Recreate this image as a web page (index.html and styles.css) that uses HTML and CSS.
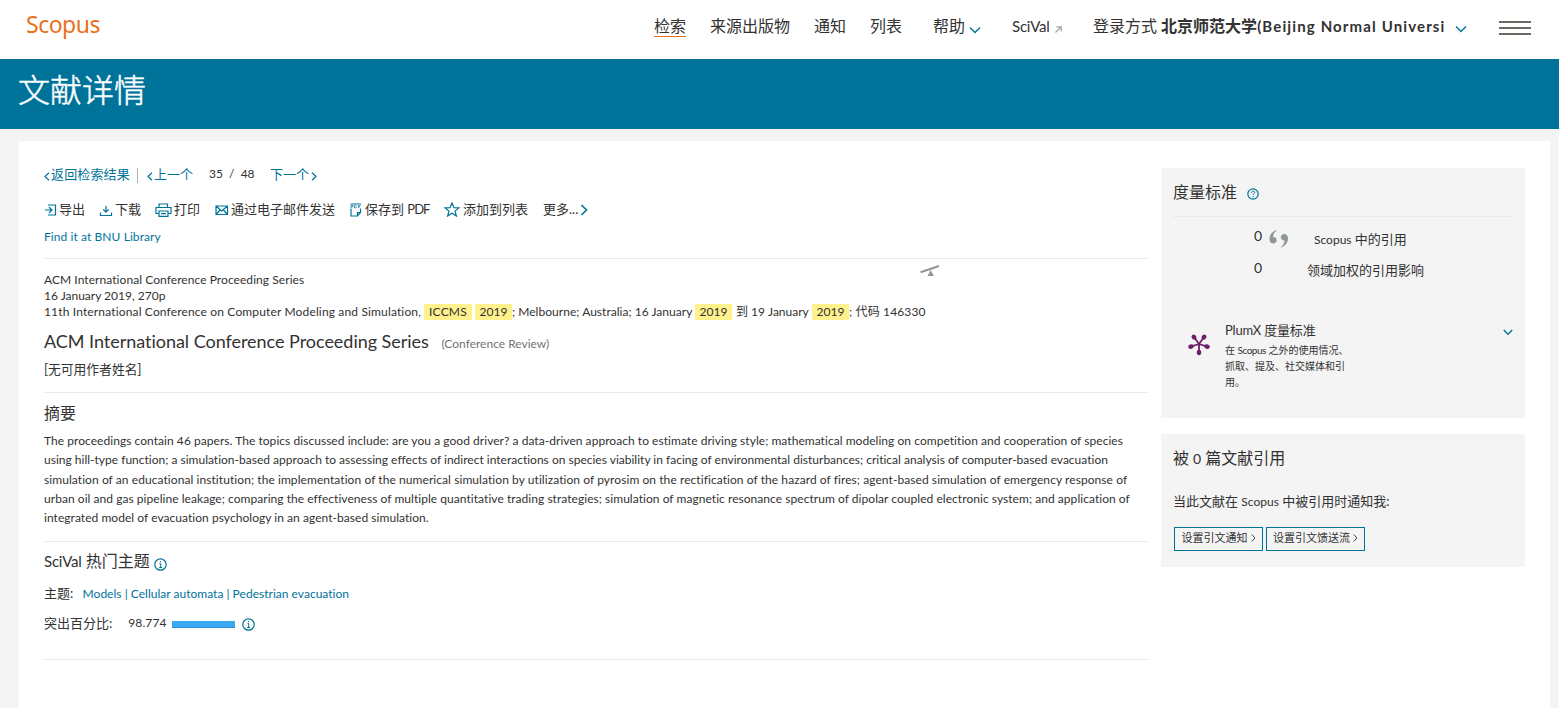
FILE: index.html
```html
<!DOCTYPE html>
<html lang="zh-CN">
<head>
    <meta charset="UTF-8">
    <meta name="viewport" content="width=device-width, initial-scale=1.0">
    <title>Scopus - 文献详情</title>
    <link rel="stylesheet" href="styles.css">
</head>
<body>
    <header class="header">
        <a class="logo">Scopus</a>
        <nav class="nav">
            <a><span class="active">检索</span></a>
            <a>来源出版物</a>
            <a>通知</a>
            <a>列表</a>
            <a>帮助<svg class="chevron help" width="12" height="8" viewBox="0 0 12 8"><path d="M1 1.5l5 5 5-5"/></svg></a>
            <a class="scival">SciVal<svg class="external" width="7" height="7" viewBox="0 0 7 7"><path d="M.5 6.5l5.5-5.5M1.5.8H6.2V5.5"/></svg></a>
            <a>登录方式 <b>北京师范大学<span class="inst">(Beijing Normal Universi</span></b></a>
        </nav>
        <svg class="chevron login" width="12" height="8" viewBox="0 0 12 8"><path d="M1 1.5l5 5 5-5"/></svg>
        <div class="menu"><i></i><i></i><i></i></div>
    </header>

    <div class="banner"><h1>文献详情</h1></div>

    <main class="page">
        <div class="content">
            <div class="pager">
                <a class="back"><svg width="6" height="9" viewBox="0 0 6 9"><path d="M5 .7L1 4.5l4 3.8"/></svg>返回检索结果</a>
                <a class="prev"><svg width="6" height="9" viewBox="0 0 6 9"><path d="M5 .7L1 4.5l4 3.8"/></svg>上一个</a>
                <span class="count">35&nbsp; / &nbsp;48</span>
                <a class="next">下一个<svg width="6" height="9" viewBox="0 0 6 9"><path d="M1 .7l4 3.8-4 3.8"/></svg></a>
            </div>

            <div class="toolbar">
                <a><svg width="14" height="14" viewBox="0 0 14 14"><path d="M4 2h7.5v10H4M1 7h6.5M5 4l3 3-3 3"/></svg>导出</a>
                <a><svg width="15" height="14" viewBox="0 0 15 14"><path d="M7 3v6M4.200 6.400L7 9.200l2.800-2.800M1.500 9.500v3h11v-3"/></svg>下载</a>
                <a><svg width="18" height="14" viewBox="0 0 18 14"><path d="M4 4.5V1h8.500v3.500M3.500 10.500H1v-6h15v6h-2.500M4 8h9v5.400H4zM6 10.700h5"/></svg>打印</a>
                <a><svg width="15" height="14" viewBox="0 0 15 14"><path d="M1 3h11.500v8.500H1zM1 3l5.700 5 5.800-5M1 11.500l4-4.500M12.500 11.500l-4-4.500"/></svg>通过电子邮件发送</a>
                <a><svg width="15" height="14" viewBox="0 0 15 14"><path d="M2 5.500V13h6.500l3-3.500v-4M8.500 13V9.500h3M1.500 1h10.500"/><path class="thin" d="M2 5V2.500h2v1.300H2M5.500 5V2.500h1.200L7.700 3.700 6.700 5H5.500M9.500 5V2.500h2M9.500 3.800h1.700"/></svg>保存到 <span class="pdf">PDF</span></a>
                <a><svg width="18" height="15" viewBox="0 0 18 15"><path d="M8 1l1.900 4.700 5 .2-3.900 3.200 1.400 4.900L8 11.200 3.600 14 5 9.100 1.100 5.900l5-.2z"/></svg>添加到列表</a>
                <a>更多...<svg class="more" width="8" height="12" viewBox="0 0 8 12"><path class="bold" d="M1.500 1l5 5-5 5"/></svg></a>
            </div>
            <a class="library">Find it at BNU Library</a>

            <section class="source">
                <svg class="seesaw" width="20" height="12" viewBox="0 0 20 12"><path class="plank" d="M.5 7.200L19 1"/><path class="pivot" d="M10.500 5l3.500 6H7.500z"/></svg>
                <p class="series">ACM International Conference Proceeding Series</p>
                <p class="issue">16 January 2019, 270p</p>
                <p class="conf"><span class="name">11th International Conference on Computer Modeling and Simulation,</span> <mark class="wide">ICCMS</mark> <mark>2019</mark><span class="place">; Melbourne; Australia; 16 January</span> <mark>2019</mark> <span class="to">到 19 January</span> <mark>2019</mark><span class="code">; 代码 146330</span></p>
                <h2>ACM International Conference Proceeding Series <small>(Conference Review)</small></h2>
                <p class="authors">[无可用作者姓名]</p>
            </section>

            <section class="abstract">
                <h3>摘要</h3>
                <p>The proceedings contain 46 papers. The topics discussed include: are you a good driver? a data-driven approach to estimate driving style; mathematical modeling on competition and cooperation of species<br>
                <span class="tight">using hill-type function; a simulation-based approach to assessing effects of indirect interactions on species viability in facing of environmental disturbances; critical analysis of computer-based evacuation</span><br>
                <span class="loose">simulation of an educational institution; the implementation of the numerical simulation by utilization of pyrosim on the rectification of the hazard of fires; agent-based simulation of emergency response of</span><br>
                urban oil and gas pipeline leakage; comparing the effectiveness of multiple quantitative trading strategies; simulation of magnetic resonance spectrum of dipolar coupled electronic system; and application of<br>
                integrated model of evacuation psychology in an agent-based simulation.</p>
            </section>

            <section class="topics">
                <h3><span class="brand">SciVal</span> 热门主题<svg class="info" width="13" height="13" viewBox="0 0 13 13"><circle cx="6.500" cy="6.500" r="5.700"/><path d="M5.500 5.500h1.200v4M5.200 9.500h3M6.500 3v1.200"/></svg></h3>
                <div class="topic">主题: <a>Models | Cellular automata | Pedestrian evacuation</a></div>
                <div class="prominence">突出百分比: <span>98.774</span><i class="bar"></i><svg class="info" width="13" height="13" viewBox="0 0 13 13"><circle cx="6.500" cy="6.500" r="5.700"/><path d="M5.500 5.500h1.200v4M5.200 9.500h3M6.500 3v1.200"/></svg></div>
            </section>
        </div>

        <aside class="sidebar">
            <section class="card metrics">
                <h3>度量标准<svg class="question" width="12" height="12" viewBox="0 0 12 12"><circle cx="6" cy="6" r="5.200"/><path d="M4.500 4.800c0-2.200 3.200-2.200 3.200-.3 0 1-1.500 1-1.500 2.500M6.200 8v1.200"/></svg></h3>
                <div class="metric">
                    <span class="num">0</span>
                    <svg class="quotes" width="20" height="18" viewBox="0 0 20 18"><path d="M7.500 0C3 1.500.5 5 .5 9c0 3 1.500 4.500 3.800 4.500 2 0 3.400-1.500 3.400-3.300 0-2-1.400-3.300-3.700-3.200C4.200 4.200 5.500 2 7.700.600z"/><path d="M12 17.500c4.500-1.500 7-5 7-9C19 5.500 17.500 4 15.200 4c-2 0-3.400 1.500-3.400 3.300 0 2 1.400 3.300 3.700 3.200-.2 2.800-1.500 5-3.700 6.400z"/></svg>
                    <span class="label"><span class="small">Scopus</span> 中的引用</span>
                </div>
                <div class="metric">
                    <span class="num">0</span>
                    <span class="label impact">领域加权的引用影响</span>
                </div>
                <div class="plumx">
                    <svg class="plum" width="24" height="24" viewBox="0 0 24 24"><g id="arm"><path d="M12 12V19"/><ellipse cx="12" cy="20.500" rx="2.200" ry="2.700"/></g><use href="#arm" transform="rotate(72 12 12)"/><use href="#arm" transform="rotate(144 12 12)"/><use href="#arm" transform="rotate(216 12 12)"/><use href="#arm" transform="rotate(288 12 12)"/></svg>
                    <div>
                        <h4>PlumX 度量标准</h4>
                        <p>在 <span class="tiny">Scopus</span> 之外的使用情况、<br>抓取、提及、社交媒体和引<br>用。</p>
                    </div>
                    <svg class="chevron" width="10" height="7" viewBox="0 0 10 7"><path d="M.8 1L5 5.300 9.200 1"/></svg>
                </div>
            </section>
            <section class="card cited">
                <h3>被 <span class="zero">0</span> 篇文献引用</h3>
                <p>当此文献在 <span class="small">Scopus</span> 中被引用时通知我:</p>
                <div class="buttons">
                    <button class="alert">设置引文通知<svg width="5" height="8" viewBox="0 0 5 8"><path d="M.7.500L4 4 .7 7.500"/></svg></button>
                    <button class="feed">设置引文馈送流<svg width="5" height="8" viewBox="0 0 5 8"><path d="M.7.500L4 4 .7 7.500"/></svg></button>
                </div>
            </section>
        </aside>
    </main>
</body>
</html>
```
FILE: styles.css
```css
* {
    margin: 0;
    padding: 0;
    box-sizing: border-box;
}

body {
    font-family: Lato, "Noto Sans CJK SC", sans-serif;
    font-size: 13px;
    font-variant-ligatures: none;
    color: #323232;
    background-color: #f4f4f4;
    height: 708px;
    overflow: hidden;
}

a {
    color: #00739b;
}

svg {
    fill: none;
    flex: none;
}

svg path,
svg circle {
    stroke-width: 1.2;
}

h1, h2, h3, h4 {
    font-weight: normal;
}

/* Header */
.header {
    display: flex;
    height: 59px;
    background-color: #fff;
    padding-left: 26px;
}

.logo {
    width: 628px;
    font-family: "Noto Sans", sans-serif;
    font-size: 23px;
    line-height: 49px;
    letter-spacing: -0.5px;
    color: #e9711c;
}

.nav {
    display: grid;
    grid-template-columns: 56px 104px 56px 63px 79px 81px 362px;
    height: 52px;
    font-size: 16px;
    line-height: 52px;
    white-space: nowrap;
}

.nav a {
    color: #323232;
}

.active {
    display: inline-block;
    line-height: 20px;
    border-bottom: 1px solid #e9711c;
}

.chevron path,
.pager svg path,
.toolbar svg path {
    stroke: #007398;
}

.chevron path {
    stroke-width: 1.4;
}

.help {
    margin-left: 4px;
    vertical-align: -2px;
}

.scival {
    font-size: 15px;
    letter-spacing: -0.2px;
}

.external {
    margin-left: 5px;
    stroke: #a0a0a0;
    vertical-align: -1px;
}

.inst {
    font-size: 15px;
    letter-spacing: 1.13px;
}

.login {
    margin-top: 25px;
}

.menu {
    margin: 21px 0 0 32px;
    width: 32px;
}

.menu i {
    display: block;
    height: 2px;
    margin-bottom: 4px;
    background-color: #6b6b63;
}

/* Banner */
.banner {
    height: 70px;
    padding-left: 18px;
    background-color: #00739b;
    color: #fff;
}

.banner h1 {
    font-size: 32px;
    line-height: 58px;
    font-family: "Noto Sans CJK SC", sans-serif;
    font-weight: 300;
    -webkit-text-stroke: 0.5px #fff;
}

/* Page */
.page {
    display: flex;
    width: 1531px;
    height: 567px;
    margin: 12px 0 0 19px;
    padding: 0 25px;
    background-color: #fff;
}

.content {
    width: 1104px;
    margin-right: 13px;
}

.pager {
    display: flex;
    height: 20px;
    margin-top: 23px;
    line-height: 20px;
    white-space: nowrap;
}

.pager svg {
    margin-right: 1px;
    vertical-align: -2px;
}

.back {
    width: 93px;
    letter-spacing: 0.15px;
}

.prev {
    width: 72px;
    height: 15px;
    margin-top: 4px;
    padding-left: 9px;
    line-height: 12px;
    border-left: 1px solid #b0b0b0;
}

.count {
    width: 61px;
    font-size: 12px;
}

.next svg {
    margin-left: 2px;
}

.toolbar {
    display: grid;
    grid-template-columns: 55px 56px 60px 134px 95px 99px 60px;
    margin-top: 15px;
    height: 20px;
    line-height: 20px;
    white-space: nowrap;
}

.toolbar a {
    color: #323232;
}

.toolbar svg {
    margin-right: 1px;
    vertical-align: -3px;
}

.toolbar .thin {
    stroke-width: 0.7;
}

.toolbar .bold {
    stroke-width: 1.6;
}

.toolbar .more {
    margin-left: 2px;
    vertical-align: -2px;
}

.pdf {
    letter-spacing: -1px;
}

.library {
    display: block;
    height: 39px;
    line-height: 35px;
    font-size: 12px;
    letter-spacing: 0.08px;
}

.source {
    position: relative;
    height: 134px;
    padding-top: 13px;
    border-top: 1px solid #e9e9e9;
    font-size: 12px;
}

.source p {
    height: 16px;
    line-height: 16px;
    white-space: nowrap;
}

.seesaw {
    position: absolute;
    left: 876px;
    top: 6px;
}

.seesaw .plank {
    stroke: #8f9799;
    stroke-width: 2;
}

.seesaw .pivot {
    fill: #8f9799;
}

.series {
    letter-spacing: 0.06px;
}

.source .conf {
    display: flex;
}

.name {
    width: 377px;
    letter-spacing: 0.15px;
}

.place {
    width: 180px;
    letter-spacing: 0.03px;
}

mark {
    width: 37px;
    height: 16px;
    margin-left: 3px;
    text-align: center;
    background-color: #fff18c;
    color: #323232;
}

.wide {
    width: 48px;
    letter-spacing: 0.2px;
}

.to {
    width: 73px;
    margin-left: 4px;
}

.code {
    letter-spacing: 0.15px;
}

.source h2 {
    margin-top: 9px;
    font-size: 18px;
    line-height: 24px;
    letter-spacing: -0.03px;
}

.source small {
    margin-left: 8px;
    font-size: 12px;
    letter-spacing: 0;
    color: #737373;
}

.source .authors {
    margin-top: 5px;
    font-size: 12.8px;
}

.abstract {
    height: 149px;
    padding-top: 9px;
    border-top: 1px solid #e9e9e9;
}

.content h3 {
    font-size: 16px;
    line-height: 22px;
}

.abstract p {
    margin-top: 7px;
    font-size: 12px;
    line-height: 19.25px;
    letter-spacing: 0.045px;
    white-space: nowrap;
}

.abstract .tight {
    letter-spacing: 0.005px;
}

.abstract .loose {
    letter-spacing: 0.07px;
}

.topics {
    height: 119px;
    padding-top: 8px;
    border-top: 1px solid #e9e9e9;
    border-bottom: 1px solid #e9e9e9;
}

.brand {
    font-size: 15px;
    letter-spacing: -0.2px;
}

.info,
.question {
    stroke: #007398;
    margin-left: 4px;
    vertical-align: -4px;
}

.info path {
    stroke-width: 1;
}

.topic {
    margin-top: 10px;
    line-height: 22px;
}

.topic a {
    margin-left: 6px;
    font-size: 12px;
    letter-spacing: 0.02px;
}

.prominence {
    display: flex;
    align-items: center;
    height: 22px;
    margin-top: 6px;
}

.prominence span {
    width: 44px;
    margin-left: 16px;
    font-size: 12px;
    letter-spacing: 0.1px;
}

.bar {
    width: 63px;
    height: 7px;
    margin: 4px 3px 0 0;
    background-color: #39a9f0;
    border-bottom: 1px solid #2b8fd9;
}

.prominence .info {
    margin-top: 5px;
}

/* Sidebar */
.sidebar {
    width: 364px;
    padding-top: 27px;
}

.card {
    padding: 0 12px;
    background-color: #f4f4f4;
}

.card h3 {
    height: 49px;
    font-size: 16px;
    line-height: 47px;
}

.metrics {
    height: 250px;
    margin-bottom: 16px;
}

.metrics h3 {
    border-bottom: 1px dotted #e2e2e2;
}

.question {
    margin-left: 10px;
    vertical-align: -2px;
}

.question path {
    stroke-width: 1;
}

.metric {
    display: flex;
    height: 32px;
    padding-left: 81px;
}

.metric .num {
    width: 15px;
    font-size: 14px;
    line-height: 38px;
}

.quotes {
    margin-top: 13px;
    fill: #8f9799;
}

.small {
    font-size: 12px;
}

.metric .label {
    margin-left: 25px;
    line-height: 44px;
}

.metric .impact {
    margin-left: 38px;
    line-height: 43px;
}

.plumx {
    display: flex;
    margin-top: 39px;
    padding-left: 14px;
}

.plum {
    margin-top: 12px;
    fill: #6d1f6b;
}

.plum path {
    stroke: #6d1f6b;
    stroke-width: 1.8;
}

.plumx div {
    width: 270px;
    margin-left: 14px;
}

.plumx h4 {
    font-size: 13px;
    line-height: 20px;
    letter-spacing: -0.2px;
}

.plumx p {
    font-size: 10px;
    line-height: 16px;
    margin-top: 2px;
}

.tiny {
    letter-spacing: -0.5px;
}

.plumx .chevron {
    margin: 9px 0 0 8px;
}

.cited {
    height: 133px;
}

.zero {
    font-size: 14px;
}

.cited p {
    margin-top: 7px;
    line-height: 22px;
}

.buttons {
    display: flex;
    gap: 3px;
    margin: 14px 0 0 1px;
}

button {
    height: 24px;
    padding-bottom: 4px;
    border: 1px solid #007398;
    background: none;
    font-family: inherit;
    font-size: 11px;
    color: #323232;
    white-space: nowrap;
}

button svg {
    margin-left: 3px;
    stroke: #323232;
}

button svg path {
    stroke-width: 0.9;
}

.alert {
    width: 89px;
}

.feed {
    width: 99px;
}
```
